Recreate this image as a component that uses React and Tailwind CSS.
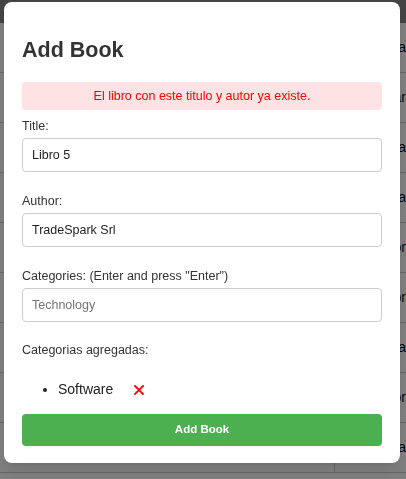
const rows = ['ora', 'ar', 'ola', 'a', 'or', 'or', 'ola', 'or', 'ola'];

const labelClass = 'block text-[12.5px] leading-[16px] text-[#333]';
const inputClass =
    'block h-[34px] w-full rounded border border-[#ccc] px-[9px] text-[12.5px] text-[#222] placeholder:text-[#757575] focus:outline-none';

export default function App() {
    return (
        <div className="relative h-[479px] w-[406px] overflow-hidden bg-white font-['Liberation_Sans',Arial,sans-serif]">
            {/* page behind the modal */}
            <div className="h-[23px] bg-[#888]" />
            {rows.map((r, i) => (
                <div key={i} className="flex h-[50px] items-center border-b border-[#ccc]">
                    <div className="h-full w-[348px] border-r border-[#ccc]" />
                    <div className="whitespace-nowrap pl-[52px] text-[14px] text-[#111]">{r}</div>
                </div>
            ))}

            <div className="fixed inset-0 bg-black/50" />

            <div className="absolute left-[4px] top-[2px] w-[396px] rounded-lg bg-white px-[18px] pb-[17px] pt-[35px] shadow-lg">
                <h2 className="text-[21.5px] font-bold leading-[26px] text-[#333]">Add Book</h2>

                <div className="mt-[19px] flex h-[28px] items-center justify-center rounded bg-[#fde3e3] text-[12.5px] text-[#f00]">
                    El libro con este titulo y autor ya existe.
                </div>

                <label className={`mt-[8px] ${labelClass}`}>Title:</label>
                <input className={`mt-[4px] ${inputClass}`} defaultValue="Libro 5" />

                <label className={`mt-[21px] ${labelClass}`}>Author:</label>
                <input className={`mt-[4px] ${inputClass}`} defaultValue="TradeSpark Srl" />

                <label className={`mt-[21px] ${labelClass}`}>Categories: (Enter and press "Enter")</label>
                <input className={`mt-[4px] ${inputClass}`} placeholder="Technology" />

                <label className={`mt-[20px] ${labelClass}`}>Categorias agregadas:</label>
                <ul className="mt-[23px] list-disc pl-[36px] text-[14px] leading-[16px] text-[#222]">
                    <li>
                        Software
                        <button type="button" className="ml-[21px] inline-block align-middle">
                            <svg width="10" height="10" viewBox="0 0 10 10" className="block">
                                <path d="M1 1L9 9M9 1L1 9" stroke="#ff0000" strokeWidth="1.8" strokeLinecap="square" />
                            </svg>
                        </button>
                    </li>
                </ul>

                <button
                    type="button"
                    className="mt-[17px] block h-[32px] w-full rounded bg-[#4caf50] text-[11.5px] font-bold text-white"
                >
                    Add Book
                </button>
            </div>
        </div>
    );
}
